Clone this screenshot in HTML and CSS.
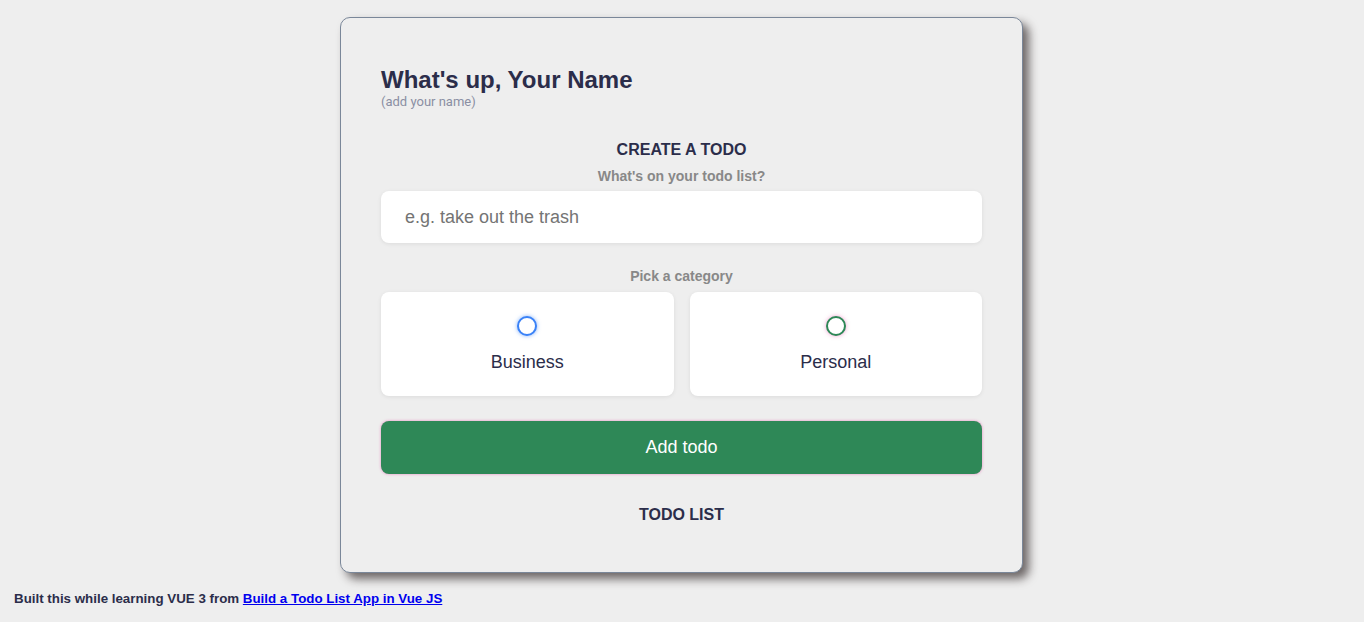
FILE: index.html
```html
<!DOCTYPE html>
<html lang="en">
<head>
<meta charset="utf-8">
<title>Todo</title>
<link rel="stylesheet" href="styles.css">
</head>
<body>
<main class="app">
  <section class="card">
    <header class="greeting">
      <h2 class="title">What's up, <span class="name">Your Name</span></h2>
      <div class="hint">(add your name)</div>
    </header>

    <section class="create">
      <h3 class="section-title">CREATE A TODO</h3>
      <form class="form">
        <h4 class="label">What's on your todo list?</h4>
        <input class="text-input" type="text" placeholder="e.g. take out the trash">

        <h4 class="label label-cat">Pick a category</h4>
        <div class="options">
          <label class="option">
            <span class="bubble bubble-business"></span>
            <span class="option-text">Business</span>
          </label>
          <label class="option">
            <span class="bubble bubble-personal"></span>
            <span class="option-text">Personal</span>
          </label>
        </div>

        <button class="submit" type="button">Add todo</button>
      </form>
    </section>

    <section class="list">
      <h3 class="section-title">TODO LIST</h3>
    </section>
  </section>

  <footer class="footer">
    Built this while learning VUE 3 from <a class="link" href="#">Build a Todo List App in Vue JS</a>
  </footer>
</main>
</body>
</html>
```

FILE: styles.css
```css
* { box-sizing: border-box; }

html, body {
  margin: 0;
  padding: 0;
  background: #eeeeee;
  font-family: "Liberation Sans", Arial, sans-serif;
  color: #2b2d4a;
}

.app {
  padding-top: 17px;
  padding-right: 1px;
}

.card {
  width: 683px;
  margin: 0 auto;
  padding: 40px 40px 47px 40px;
  background: #eeeeee;
  border: 1px solid #7a8799;
  border-radius: 10px;
  box-shadow: 6px 6px 10px rgba(40, 30, 30, 0.65);
}

.greeting {
  margin-top: 8px;
}

.title {
  margin: 0;
  font-size: 24px;
  line-height: 28px;
  font-weight: 700;
  color: #2b2d4a;
}

.hint {
  font-size: 13px;
  line-height: 16px;
  color: #8a8fa3;
  font-family: Roboto, "Liberation Sans", sans-serif;
}

.create {
  margin-top: 30px;
}

.section-title {
  margin: 0;
  text-align: center;
  font-size: 16px;
  line-height: 20px;
  font-weight: 700;
  color: #2b2d4a;
}

.form {
  display: flex;
  flex-direction: column;
}

.label {
  margin: 8px 0 7px;
  text-align: center;
  font-size: 14px;
  line-height: 16px;
  font-weight: 700;
  color: #888888;
}

.text-input {
  width: 100%;
  height: 52px;
  padding: 0 24px;
  border: none;
  border-radius: 8px;
  background: #ffffff;
  box-shadow: 0 1px 4px rgba(0, 0, 0, 0.08);
  font-family: "Liberation Sans", Arial, sans-serif;
  font-size: 18px;
  color: #2b2d4a;
  outline: none;
}

.text-input::placeholder {
  color: #747474;
}

.label-cat {
  margin-top: 25px;
  margin-bottom: 8px;
}

.options {
  display: grid;
  grid-template-columns: 1fr 1fr;
  gap: 16px;
}

.option {
  display: flex;
  flex-direction: column;
  align-items: center;
  height: 104px;
  padding-top: 24px;
  background: #ffffff;
  border-radius: 8px;
  box-shadow: 0 1px 4px rgba(0, 0, 0, 0.08);
  cursor: pointer;
}

.bubble {
  display: block;
  width: 20px;
  height: 20px;
  border-radius: 50%;
  border: 2px solid #3a82f7;
  background: #ffffff;
}

.bubble-business {
  border-color: #3a82f7;
  box-shadow: 0 0 4px rgba(58, 130, 247, 0.6);
}

.bubble-personal {
  border-color: #2e8857;
  box-shadow: 0 0 4px rgba(234, 64, 164, 0.5);
}

.option-text {
  margin-top: 15px;
  font-size: 18px;
  line-height: 22px;
  color: #2b2d4a;
}

.submit {
  margin-top: 25px;
  height: 53px;
  width: 100%;
  border: none;
  border-radius: 8px;
  background: #2e8857;
  box-shadow: 0 0 3px rgba(234, 64, 164, 0.6);
  font-family: "Liberation Sans", Arial, sans-serif;
  font-size: 18px;
  color: #ffffff;
  cursor: pointer;
}

.list {
  margin-top: 31px;
}

.footer {
  padding: 18px 14px 0;
  font-size: 13.33px;
  line-height: 16px;
  font-weight: 700;
  color: #2b2d4a;
}

.link {
  color: #0000ee;
  text-decoration: underline;
}
```
